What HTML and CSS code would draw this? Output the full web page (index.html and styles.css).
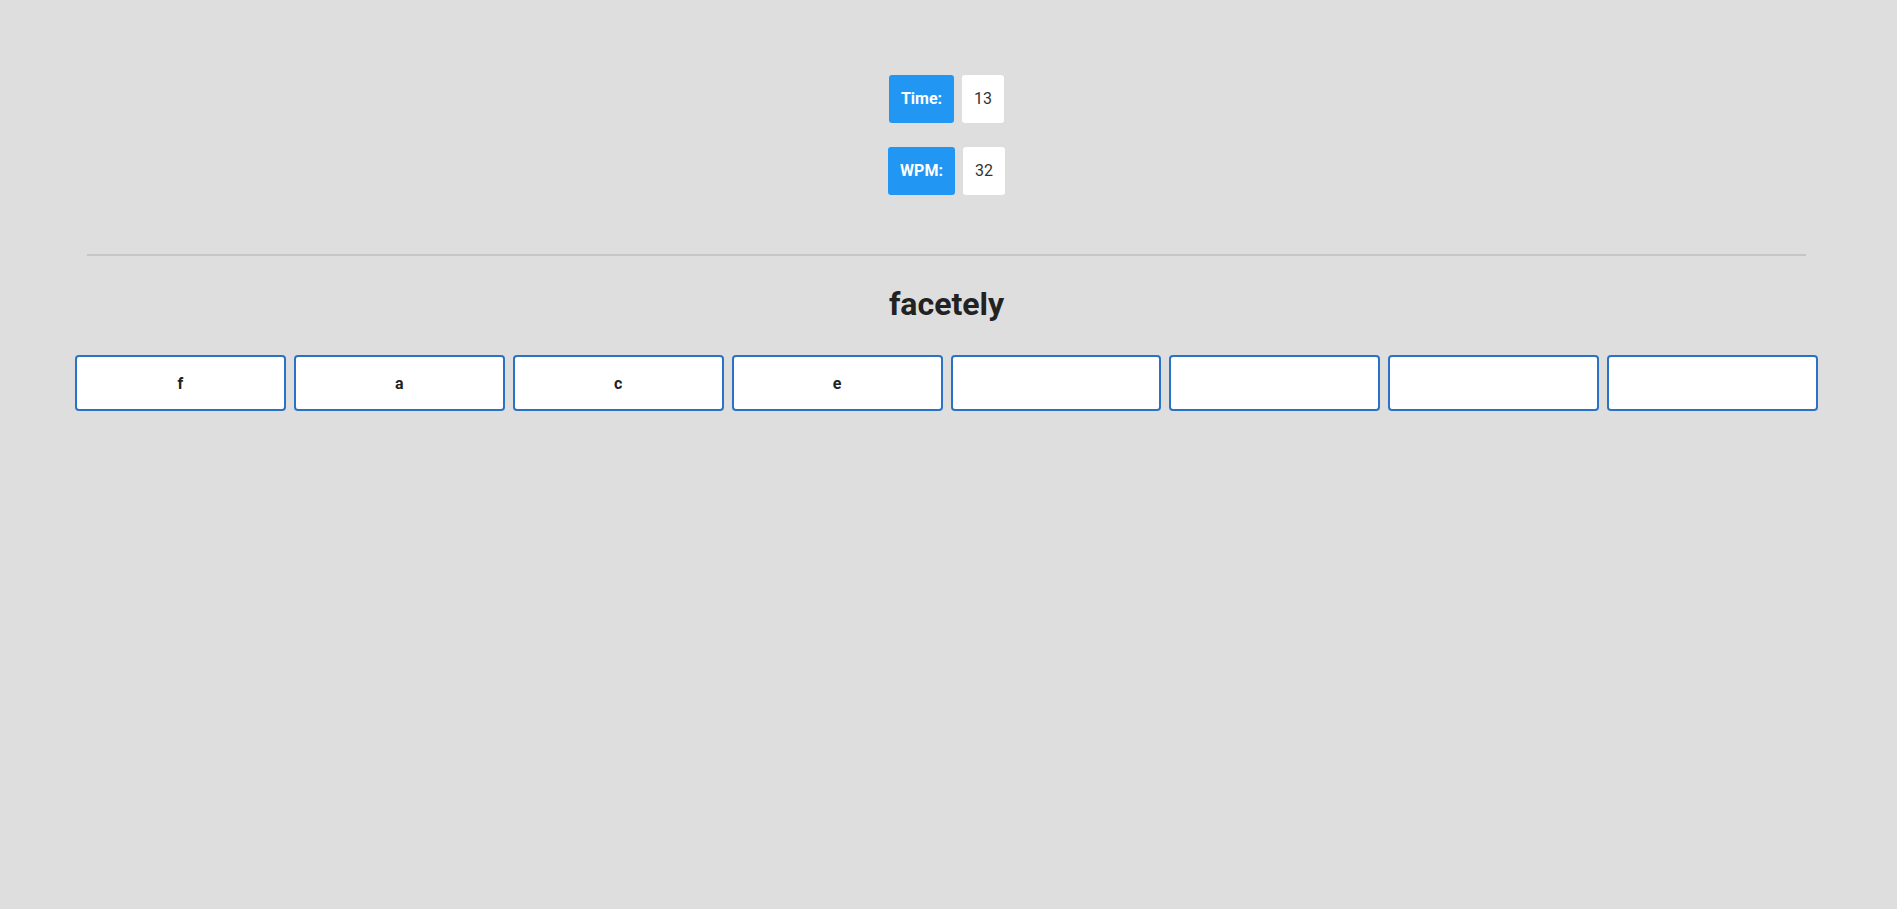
FILE: index.html
```html
<!DOCTYPE html>
<html lang="en">
<head>
<meta charset="utf-8">
<title>Typing game</title>
<link rel="stylesheet" href="styles.css">
</head>
<body>
<div class="page">
  <div class="stats">
    <div class="stat-row">
      <span class="stat-label">Time:</span>
      <span class="stat-value">13</span>
    </div>
    <div class="stat-row">
      <span class="stat-label">WPM:</span>
      <span class="stat-value">32</span>
    </div>
  </div>
  <hr class="divider">
  <h1 class="word">facetely</h1>
  <div class="letters">
    <div class="letter">f</div>
    <div class="letter">a</div>
    <div class="letter">c</div>
    <div class="letter">e</div>
    <div class="letter"></div>
    <div class="letter"></div>
    <div class="letter"></div>
    <div class="letter"></div>
  </div>
</div>
</body>
</html>
```
FILE: styles.css
```css
html, body {
  margin: 0;
  padding: 0;
  background: #dedede;
  font-family: Roboto, "Liberation Sans", Arial, sans-serif;
}

.page {
  padding-right: 4px;
  padding-top: 75px;
}

.stats {
  display: flex;
  flex-direction: column;
  align-items: center;
  gap: 24px;
}

.stat-row {
  display: flex;
  gap: 8px;
}

.stat-label {
  background: #2196f3;
  color: #ffffff;
  font-weight: 700;
  font-size: 16px;
  line-height: 24px;
  padding: 12px 12px;
  border-radius: 3px;
}

.stat-value {
  background: #ffffff;
  color: #333333;
  font-weight: 400;
  font-size: 16px;
  line-height: 24px;
  padding: 12px 12px;
  border-radius: 3px;
}

.divider {
  border: 0;
  border-top: 2px solid #c6c6c6;
  margin: 59px 87px 0 87px;
  height: 0;
}

.word {
  text-align: center;
  font-size: 32px;
  font-weight: 700;
  color: #222222;
  margin: 29px 0 0 0;
  line-height: 38px;
}

.letters {
  display: flex;
  gap: 8px;
  margin: 32px 75px 0 75px;
}

.letter {
  flex: 1;
  height: 52px;
  border: 2px solid #2a72c6;
  border-radius: 4px;
  background: #ffffff;
  display: flex;
  align-items: center;
  justify-content: center;
  font-weight: 700;
  font-size: 16px;
  color: #222222;
}
```
